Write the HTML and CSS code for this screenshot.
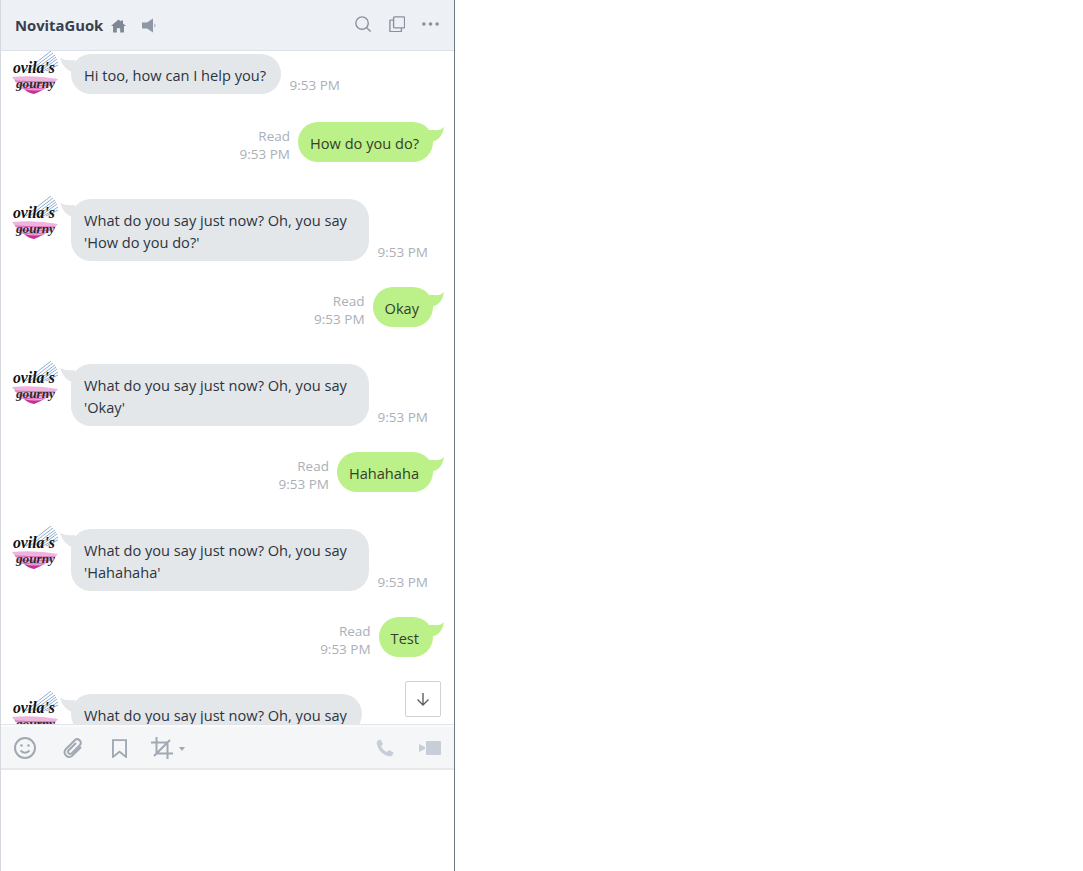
FILE: index.html
```html
<!DOCTYPE html>
<html lang="en">
<head>
<meta charset="utf-8">
<title>NovitaGuok</title>
<link rel="stylesheet" href="styles.css">
</head>
<body>
<svg class="defs" width="0" height="0" aria-hidden="true">
  <defs>
    <symbol id="logo" viewBox="0 0 46 45">
      <g fill="none" stroke="#7295c6" stroke-width=".8">
        <path d="M14 20 Q26 10 39 0"/><path d="M18 20 Q30 10 41 2"/><path d="M22 20 Q33 11 43 4"/><path d="M25 20 Q35 13 44 6"/><path d="M28 20 Q37 14 45 8"/><path d="M31 20 Q39 16 46 11"/><path d="M34 20 Q40 17 46 14"/>
      </g>
      <path d="M0 26 Q24 24 46 28 Q40 36 22 43 Q8 38 0 26Z" fill="#eeb4de"/>
      <g fill="none" stroke="#d65cb4" stroke-width=".9">
        <path d="M3 30 Q24 31 43 31"/><path d="M6 34 Q24 36 39 34"/><path d="M9 37 Q22 39 33 37"/>
      </g>
      <path d="M12 38 Q24 41 32 38 Q27 41 22 43 Q16 42 12 38Z" fill="#c62f98"/>
      <text x="1" y="22" class="logo-top" textLength="42" lengthAdjust="spacingAndGlyphs">ovila's</text>
      <text x="4" y="37" class="logo-bottom" textLength="39" lengthAdjust="spacingAndGlyphs">gourny</text>
    </symbol>
    <symbol id="tail-in" viewBox="0 0 15 15">
      <path d="M0 0 Q6 3 15 2 L15 15 Q4 13 0 0Z"/>
    </symbol>
    <symbol id="tail-out" viewBox="0 0 15 15">
      <path d="M15 0 Q11 4 5 3 L0 3 L0 15 Q13 14 15 0Z"/>
    </symbol>
  </defs>
</svg>
<main class="chat">
  <header class="chat-header">
    <div class="title-group">
      <h1 class="title">NovitaGuok</h1>
      <svg class="icon-home" viewBox="0 0 16 14"><path d="M8 0 L10.500 2.200 V1 H12.800 V4.200 L16 7 H13.800 V14 H9.800 V9.500 H6.200 V14 H2.200 V7 H0Z"/></svg>
      <svg class="icon-speaker" viewBox="0 0 15 15"><path d="M0 4.500H5L11 0.500V14.500L5 10.500H0Z"/><path d="M12.500 5.500Q14.500 7.500 12.500 9.500Z"/></svg>
    </div>
    <div class="header-actions">
      <svg class="icon-action" viewBox="0 0 18 18"><circle cx="7.700" cy="7.700" r="6.800"/><path d="M12.500 12.500 L17 17"/></svg>
      <svg class="icon-action" viewBox="0 0 18 18"><rect x="5" y="1" width="12" height="12" rx="1"/><path d="M5 4.500H1.500a.5 .5 0 0 0-.5 .5V16.500a.5 .5 0 0 0 .5 .5H13a.5 .5 0 0 0 .5-.5V13"/></svg>
      <svg class="icon-dots" viewBox="0 0 18 4"><circle cx="2" cy="2" r="1.900"/><circle cx="9" cy="2" r="1.900"/><circle cx="16" cy="2" r="1.900"/></svg>
    </div>
  </header>

  <section class="messages">
    <div class="msg msg-in">
      <svg class="avatar"><use href="#logo"/></svg>
      <div class="msg-body">
        <div class="bubble bubble-in"><svg class="tail tail-in"><use href="#tail-in"/></svg>Hi too, how can I help you?</div>
        <span class="time">9:53 PM</span>
      </div>
    </div>
    <div class="msg msg-out">
      <div class="meta"><span>Read</span><span>9:53 PM</span></div>
      <div class="bubble bubble-out">How do you do?<svg class="tail tail-out"><use href="#tail-out"/></svg></div>
    </div>
    <div class="msg msg-in">
      <svg class="avatar"><use href="#logo"/></svg>
      <div class="msg-body">
        <div class="bubble bubble-in"><svg class="tail tail-in"><use href="#tail-in"/></svg>What do you say just now? Oh, you say 'How do you do?'</div>
        <span class="time">9:53 PM</span>
      </div>
    </div>
    <div class="msg msg-out">
      <div class="meta"><span>Read</span><span>9:53 PM</span></div>
      <div class="bubble bubble-out">Okay<svg class="tail tail-out"><use href="#tail-out"/></svg></div>
    </div>
    <div class="msg msg-in">
      <svg class="avatar"><use href="#logo"/></svg>
      <div class="msg-body">
        <div class="bubble bubble-in"><svg class="tail tail-in"><use href="#tail-in"/></svg>What do you say just now? Oh, you say 'Okay'</div>
        <span class="time">9:53 PM</span>
      </div>
    </div>
    <div class="msg msg-out">
      <div class="meta"><span>Read</span><span>9:53 PM</span></div>
      <div class="bubble bubble-out">Hahahaha<svg class="tail tail-out"><use href="#tail-out"/></svg></div>
    </div>
    <div class="msg msg-in">
      <svg class="avatar"><use href="#logo"/></svg>
      <div class="msg-body">
        <div class="bubble bubble-in"><svg class="tail tail-in"><use href="#tail-in"/></svg>What do you say just now? Oh, you say 'Hahahaha'</div>
        <span class="time">9:53 PM</span>
      </div>
    </div>
    <div class="msg msg-out">
      <div class="meta"><span>Read</span><span>9:53 PM</span></div>
      <div class="bubble bubble-out">Test<svg class="tail tail-out"><use href="#tail-out"/></svg></div>
    </div>
    <div class="msg msg-in">
      <svg class="avatar"><use href="#logo"/></svg>
      <div class="msg-body">
        <div class="bubble bubble-in"><svg class="tail tail-in"><use href="#tail-in"/></svg>What do you say just now? Oh, you say</div>
      </div>
    </div>
    <button class="scroll-down" type="button" aria-label="Scroll to bottom">
      <svg viewBox="0 0 14 14"><path d="M7 1V13M1.500 7.500 L7 13 L12.500 7.500"/></svg>
    </button>
  </section>

  <div class="toolbar">
    <div class="tools">
      <svg class="tool" viewBox="0 0 22 22"><circle cx="11" cy="11" r="10"/><circle class="solid" cx="7.500" cy="8.500" r="1.300"/><circle class="solid" cx="14.500" cy="8.500" r="1.300"/><path d="M6.500 13.500 Q11 18 15.500 13.500"/></svg>
      <svg class="tool tool-clip" viewBox="0 0 22 22"><path d="M19 10 L10.500 18.500 C6 22.500 0 16.500 4 12 L13 3 C16 0.500 20.500 4.500 18 8 L9.500 16.500 C7.500 18 5 15.500 6.500 13.500 L14 6"/></svg>
      <svg class="tool tool-mark" viewBox="0 0 16 20"><path d="M1 1H15V19L8 13.500 L1 19Z"/></svg>
      <div class="crop">
        <svg class="tool" viewBox="0 0 22 22"><path d="M5.500 0V16.500H22M0 5.500H16.500V22M3 19 L19 3"/></svg>
        <span class="caret"></span>
      </div>
    </div>
    <div class="tools tools-right">
      <svg class="call" viewBox="0 0 18 18"><path d="M4.500 0.500 L7 5 L5 7 Q7 11.500 11 13 L13 11 L17.500 13.500 Q17 17 14 17.500 Q3 16 0.500 4 Q1 1 4.500 0.500Z"/></svg>
      <svg class="video" viewBox="0 0 22 14"><path d="M0 3 L6 6 V8 L0 11Z"/><rect x="7" y="0" width="15" height="14" rx="1"/></svg>
    </div>
  </div>
  <div class="composer"></div>
</main>
</body>
</html>
```
FILE: styles.css
```css
* { box-sizing: border-box; }
html, body { margin: 0; height: 100%; background: #fff; }
body { font-family: "Open Sans", "Noto Sans", sans-serif; color: #2c3440; }
.defs { position: absolute; }

.chat {
  width: 455px;
  height: 871px;
  display: flex;
  flex-direction: column;
  border-left: 1px solid #d5d9df;
  border-right: 1px solid #6d7885;
}

.chat-header {
  height: 51px;
  flex: none;
  display: flex;
  align-items: center;
  justify-content: space-between;
  padding: 0 15px 2px 14px;
  background: #edf0f4;
  border-bottom: 1px solid #dde2ea;
}
.title-group { display: flex; align-items: center; padding-top: 2px; }
.title { margin: 0; font-size: 14.8px; font-weight: 700; color: #37404d; line-height: 20px; }
.icon-home { width: 15px; height: 14px; margin: 1px 0 0 8px; fill: #7e8796; }
.icon-speaker { width: 15px; height: 15px; margin-left: 16px; fill: #8f97a4; }
.header-actions { display: flex; align-items: center; gap: 17px; }
.icon-action { width: 16.500px; height: 16.500px; fill: none; stroke: #8a919d; stroke-width: 1.500; }
.icon-dots { width: 17px; height: 4px; fill: #8a919d; }

.messages {
  position: relative;
  flex: 1;
  min-height: 0;
  overflow: hidden;
  background: #fff;
  font-size: 14.600px;
  line-height: 22px;
}
.msg { display: flex; }
.msg-in { align-items: flex-start; padding-left: 11px; margin-bottom: 26px; }
.msg-out { justify-content: flex-end; align-items: flex-start; padding-right: 21px; margin-bottom: 34px; }
.avatar { width: 46px; height: 45px; flex: none; }
.msg-body { display: flex; align-items: flex-end; margin: 3px 0 0 13px; }

.bubble { position: relative; padding: 10px 14px 8px 12px; border-radius: 20px; }
.bubble-in { max-width: 298px; background: #e4e7ea; padding: 10px 15px 8px 13px; }
.bubble-out { background: #bcf088; color: #34402a; white-space: nowrap; }
.tail { position: absolute; width: 15px; height: 15px; }
.tail-in { left: -11px; top: 4px; fill: #e4e7ea; }
.tail-out { right: -11px; top: 5px; fill: #bcf088; }

.time { flex: none; margin-left: 8.500px; font-size: 13.500px; line-height: 18px; color: #aab0b9; }
.meta { display: flex; flex-direction: column; align-items: flex-end; margin: 5px 8px -5px 0; font-size: 13.500px; line-height: 18px; color: #aab0b9; }

.scroll-down {
  position: absolute;
  right: 13px;
  bottom: 7px;
  width: 36px;
  height: 36px;
  padding: 0;
  display: flex;
  align-items: center;
  justify-content: center;
  background: #fff;
  border: 1px solid #cfd2d6;
  border-radius: 2px;
}
.scroll-down svg { width: 14px; height: 14px; fill: none; stroke: #5c6066; stroke-width: 1.400; }

.toolbar {
  height: 46px;
  flex: none;
  display: flex;
  align-items: center;
  justify-content: space-between;
  padding: 3px 13px 0;
  background: #f5f6f7;
  border-top: 1px solid #e3e5e8;
  border-bottom: 2px solid #e6e8ea;
  box-shadow: inset 0 2px 0 #fbfbfc;
}
.tools { display: flex; align-items: center; gap: 27px; }
.tools-right { gap: 25px; }
.tool { width: 22px; height: 22px; fill: none; stroke: #a1a9b5; stroke-width: 2; }
.tool-clip { margin-left: -1px; margin-right: -1px; }
.tool-mark { width: 15px; height: 19px; margin-left: 2px; margin-right: -3px; }
.tool .solid { fill: #a1a9b5; stroke: none; }
.crop { display: flex; align-items: center; gap: 6px; }
.caret { width: 0; height: 0; margin-top: 2px; border: 3px solid transparent; border-top: 4px solid #a1a9b5; border-bottom: 0; }
.call { width: 18px; height: 18px; fill: #c7ced8; }
.video { width: 22px; height: 14px; fill: #c7ced8; }
.composer { flex: none; height: 101px; background: #fff; }

.logo-top { font: italic 700 17px "Liberation Serif", serif; fill: #111; }
.logo-bottom { font: italic 700 13px "Liberation Serif", serif; fill: #2a2a2a; }
```
